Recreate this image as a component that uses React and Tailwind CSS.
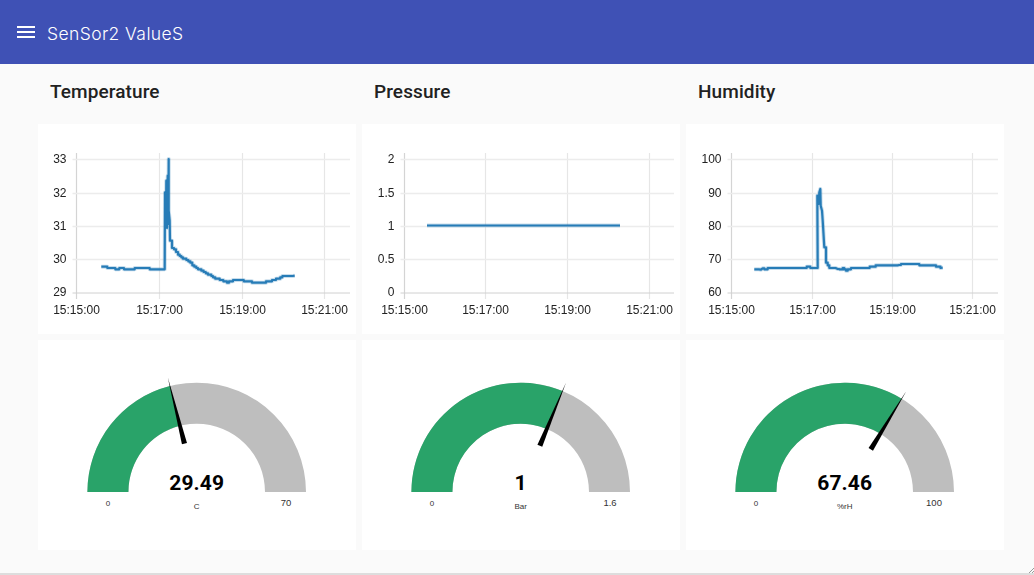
import React from "react";

// turns hand-read points into the stepped, sampled line that the chart draws
function stepped(pts) {
  const out = [];
  for (let i = 0; i < pts.length - 1; i++) {
    const [x0, y0] = pts[i];
    const [x1, y1] = pts[i + 1];
    const dx = x1 - x0;
    const dy = y1 - y0;
    if (dx < 6 || Math.abs(dy) / dx > 3) {
      out.push([x0, y0]);
      continue;
    }
    const n = Math.max(1, Math.round(dx / 6));
    for (let k = 0; k < n; k++) {
      const x = x0 + (dx * k) / n;
      const y = Math.round((y0 + (dy * k) / n) / 4) * 4;
      const last = out[out.length - 1];
      if (last && last[1] !== y) out.push([x, last[1]]);
      out.push([x, y]);
    }
  }
  out.push(pts[pts.length - 1]);
  return out;
}

const Z = (pts) => pts.map(([x, y]) => `${(x / 3).toFixed(1)},${(y / 3).toFixed(1)}`).join(" ");

const tempPts = stepped([[190,427],[205,428],[208,431],[230,432],[232,435],[250,432],[258,434],[285,434],[295,431],[325,431],[340,436],[360,437],[380,436],[381,205],[384,310],[385,170],[387,312],[389,155],[391,300],[392,105],[392,260],[395,290],[396,350],[402,370],[420,390],[430,400],[445,407],[475,433],[490,440],[510,450],[525,460],[545,466],[567,476],[585,468],[605,467],[630,473],[660,477],[690,473],[720,462],[740,454],[770,455]]);
const humPts = stepped([[205,437],[225,437],[230,433],[235,437],[245,433],[325,433],[360,432],[362,429],[395,432],[394,215],[398,240],[400,205],[403,195],[404,245],[408,260],[410,290],[415,370],[420,415],[430,430],[455,435],[460,437],[470,433],[480,441],[495,431],[545,430],[575,424],[640,423],[645,420],[695,420],[700,423],[740,423],[750,428],[770,431]]);
const presPts = [[195,304.5],[774,304.5]];

const charts = [
  { title: "Temperature", y: ["33", "32", "31", "30", "29"], gx: [38.5, 121.5, 204.5, 286.5], pts: tempPts },
  { title: "Pressure", y: ["2", "1.5", "1", "0.5", "0"], gx: [42.5, 123.5, 205.5, 287.5], pts: presPts },
  { title: "Humidity", y: ["100", "90", "80", "70", "60"], gx: [45.5, 126.5, 206.5, 286.5], pts: humPts },
];
const gy = [35.5, 69.5, 102.5, 135.5, 169];
const xl = ["15:15:00", "15:17:00", "15:19:00", "15:21:00"];

const gauges = [
  { v: "29.49", f: 29.49 / 70, min: "0", max: "70", unit: "C" },
  { v: "1", f: 1 / 1.6, min: "0", max: "1.6", unit: "Bar" },
  { v: "67.46", f: 0.6746, min: "0", max: "100", unit: "%rH" },
];

function Chart({ c }) {
  const left = c.gx[0];
  return (
    <svg viewBox="0 0 318 210" className="block w-full h-full blur-[0.4px]" fontFamily="'Liberation Sans', Arial, sans-serif">
      {c.gx.map((x, i) => (
        <line key={x} x1={x} x2={x} y1={29} y2={175} stroke={i === 0 ? "#d4d4d4" : "#e6e6e6"} strokeWidth="1.2" />
      ))}
      {gy.map((y, i) => (
        <line key={y} x1={left - 4} x2={312} y1={y} y2={y} stroke={i === 4 ? "#d0d0d0" : "#ececec"} strokeWidth={i === 4 ? 1 : 1.5} />
      ))}
      {c.y.map((t, i) => (
        <text key={t} x={left - 10} y={gy[i] + 3.4} textAnchor="end" fontSize="12" fill="#222">{t}</text>
      ))}
      {xl.map((t, i) => (
        <text key={t} x={c.gx[i]} y={190} textAnchor="middle" fontSize="12" fill="#222">{t}</text>
      ))}
      <polyline points={Z(c.pts)} fill="none" stroke="#1f77b4" strokeOpacity="0.25" strokeWidth="4" strokeLinejoin="round" />
      <polyline points={Z(c.pts)} fill="none" stroke="#1f77b4" strokeOpacity="0.95" strokeWidth="2.2" strokeLinejoin="round" />
    </svg>
  );
}

function arc(cx, cy, ro, ri, a0, a1) {
  const p = (r, a) => [cx - r * Math.cos(a), cy - r * Math.sin(a)].map((n) => n.toFixed(2)).join(" ");
  return `M${p(ro, a0)} A${ro} ${ro} 0 0 1 ${p(ro, a1)} L${p(ri, a1)} A${ri} ${ri} 0 0 0 ${p(ri, a0)} Z`;
}

function Gauge({ g }) {
  const cx = 158.7, cy = 152, ro = 109.3, ri = 68.3;
  const a = g.f * Math.PI;
  const dir = [-Math.cos(a), -Math.sin(a)];
  const nrm = [-dir[1], dir[0]];
  const tip = [cx + dir[0] * 118, cy + dir[1] * 118];
  const bc = [cx + dir[0] * 50, cy + dir[1] * 50];
  const hw = 2.6;
  const needle = `${tip[0]},${tip[1]} ${bc[0] + nrm[0] * hw},${bc[1] + nrm[1] * hw} ${bc[0] - nrm[0] * hw},${bc[1] - nrm[1] * hw}`;
  return (
    <svg viewBox="0 0 318 210" className="block w-full h-full" fontFamily="'Liberation Sans', Arial, sans-serif">
      <path d={arc(cx, cy, ro, ri, 0, Math.PI)} fill="#bebebe" />
      <path d={arc(cx, cy, ro, ri, 0, a)} fill="#29a369" />
      <polygon points={needle} fill="#000" />
      <text x={cx} y={150} textAnchor="middle" fontSize="21" fontWeight="700" fill="#010101" letterSpacing="0.1" fontFamily="Roboto, sans-serif">{g.v}</text>
      <text x={70} y={166} textAnchor="middle" fontSize="8" fill="#333">{g.min}</text>
      <text x={248} y={166} textAnchor="middle" fontSize="9.5" fill="#333">{g.max}</text>
      <text x={cx} y={169} textAnchor="middle" fontSize="8" fill="#333">{g.unit}</text>
    </svg>
  );
}

export default function App() {
  return (
    <div className="relative h-[575px] w-[1034px] overflow-hidden flex flex-col bg-[#fafafa]">
      <header className="h-16 shrink-0 bg-[#3f51b5] flex items-center pl-[17px] gap-[12px] text-white">
        <svg width="18" height="12" viewBox="0 0 18 12" className="block">
          <path d="M0 0h18v2H0zM0 5h18v2H0zM0 10h18v2H0z" fill="#fff" />
        </svg>
        <span className="pt-[3px] text-[17.5px] font-light tracking-[0.4px] leading-none font-['Inter',sans-serif]">SenSor2 ValueS</span>
      </header>
      <main className="flex-1 pl-[38px] pr-[30px]">
        <div className="grid grid-cols-3 gap-x-[6px]">
          {charts.map((c) => (
            <h2 key={c.title} className="h-[60px] pl-3 pt-4 text-[19px] tracking-[0.1px] leading-6 font-medium text-[#212121] font-['Roboto',sans-serif]">
              {c.title}
            </h2>
          ))}
        </div>
        <div className="grid grid-cols-3 gap-[6px]">
          {charts.map((c) => (
            <div key={c.title} className="h-[210px] bg-white"><Chart c={c} /></div>
          ))}
          {gauges.map((g) => (
            <div key={g.unit} className="h-[210px] bg-white"><Gauge g={g} /></div>
          ))}
        </div>
      </main>
      <div className="h-[2px] shrink-0 bg-[#dddddd]" />
      <svg width="5" height="5" viewBox="0 0 5 5" className="absolute right-0 bottom-[2px]">
        <path d="M0 5L5 0M3 5L5 3" stroke="#999" strokeWidth="1" />
      </svg>
    </div>
  );
}
